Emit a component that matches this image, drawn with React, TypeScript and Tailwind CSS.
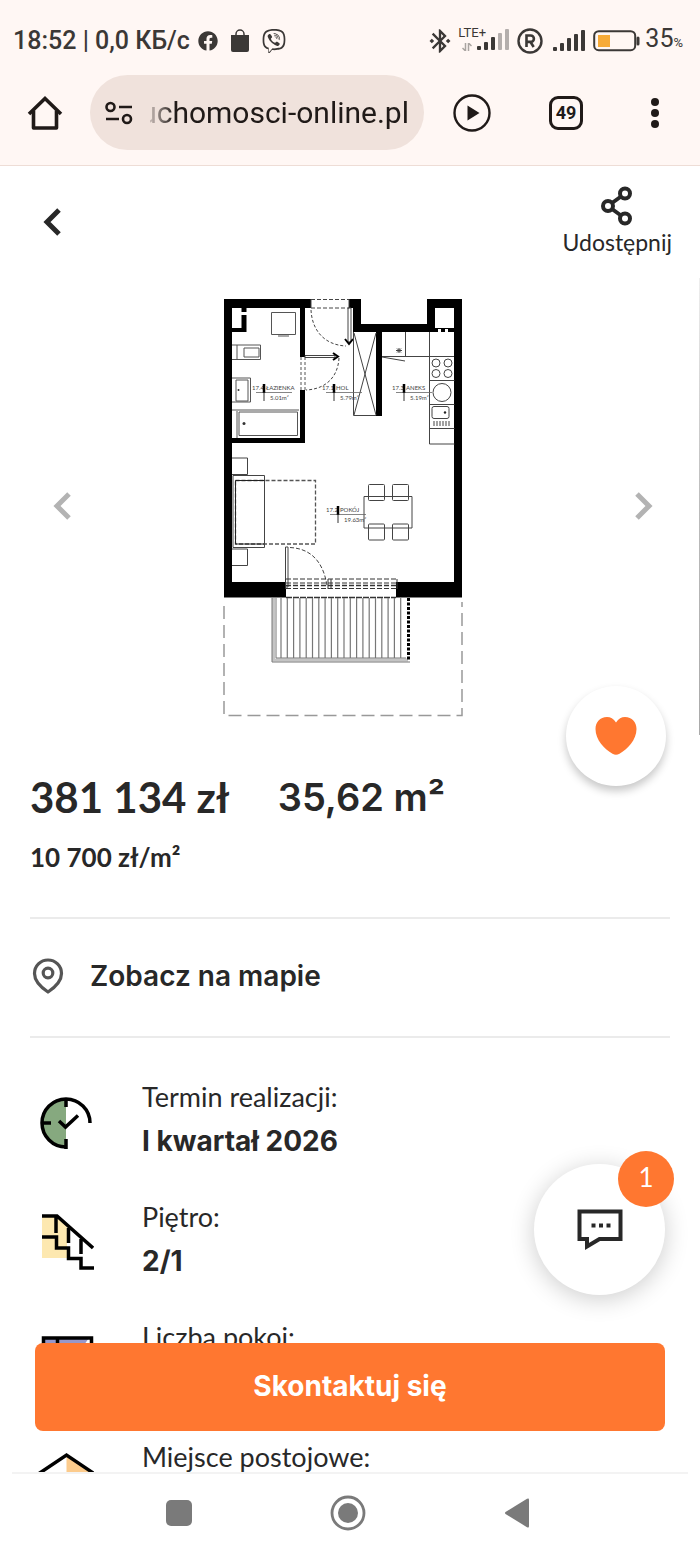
import React from 'react';
import { FaFacebook, FaViber } from 'react-icons/fa';
import { MdBluetoothConnected } from 'react-icons/md';

/* ---------- status bar ---------- */

function SignalIcon({ active = 5, className = '' }: { active?: number; className?: string }) {
  return (
    <svg viewBox="0 0 32 22" className={className} fill="#3b3836">
      {[4, 8, 13, 17, 21].map((h, i) => (
        <rect key={h} x={i * 7} y={21 - h} width="4" height={h} rx="1" opacity={i < active ? 1 : 0.38} />
      ))}
    </svg>
  );
}

function StatusBar() {
  return (
    <div className="flex h-[75px] items-center justify-between pt-[6px] pr-[17px] pl-[13px] text-[#3b3836]">
      <div className="flex items-center">
        <span className="text-[25px] leading-8 font-medium whitespace-pre">18:52 | 0,0 КБ/с</span>
        <FaFacebook className="ml-2 h-5 w-5" />
        <svg viewBox="0 0 20 24" className="ml-3 h-6 w-5">
          <path d="M1 6h18v15a2 2 0 0 1-2 2H3a2 2 0 0 1-2-2z" fill="currentColor" />
          <path d="M6 7V5a4 4 0 0 1 8 0v2" fill="none" stroke="currentColor" strokeWidth="1.5" />
        </svg>
        <FaViber className="ml-3 h-6 w-6" />
      </div>
      <div className="flex items-center">
        <MdBluetoothConnected className="h-7 w-7" />
        <div className="relative ml-1 h-7 w-[51px]">
          <span className="absolute top-0 left-0 text-[13px] leading-3">LTE+</span>
          <svg viewBox="0 0 10 8" className="absolute bottom-1 left-1 h-2 w-[10px]" fill="none" stroke="#a9a4a1" strokeWidth="1.5">
            <path d="M3.5 0v8L.5 5M6.500 8V0l3 3" />
          </svg>
          <SignalIcon active={3} className="absolute right-0 bottom-1 h-[22px] w-8" />
        </div>
        <svg viewBox="0 0 26 26" className="ml-2 h-[26px] w-[26px]" fill="none" stroke="currentColor">
          <circle cx="13" cy="13" r="11.500" strokeWidth="2.400" />
          <path d="M9.500 19V7.500h4.200a3.200 3.200 0 0 1 0 6.400H9.500M13.500 14l3.200 5" strokeWidth="2.600" />
        </svg>
        <SignalIcon className="ml-2.5 h-[22px] w-8" />
        <svg viewBox="0 0 48 22" className="ml-2 h-[22px] w-12">
          <rect x="1.200" y="1.200" width="41" height="19" rx="4.500" fill="none" stroke="currentColor" strokeWidth="2" />
          <rect x="5" y="5" width="12" height="12" fill="#f7ab38" />
          <path d="M45 8v6" stroke="currentColor" strokeWidth="3" strokeLinecap="round" />
        </svg>
        <span className="ml-1 text-[25px] leading-8">
          35<span className="text-[13px]">%</span>
        </span>
      </div>
    </div>
  );
}

/* ---------- browser toolbar ---------- */

function BrowserBar() {
  return (
    <div className="flex items-center pb-[15px] text-[#201a18]">
      <button aria-label="Strona główna" className="flex w-[90px] justify-center">
        <svg viewBox="0 0 36 36" className="h-9 w-9" fill="none" stroke="currentColor" strokeWidth="3.600" strokeLinejoin="round">
          <path d="M2 19 18 3.500 34 19" strokeLinejoin="miter" />
          <path d="M6.500 15.500V33h23V15.500" />
        </svg>
      </button>
      <button className="flex h-[75px] min-w-0 flex-1 items-center rounded-full bg-[#f0e2dc] pr-[15px] pl-[15px]">
        <svg viewBox="0 0 28 24" className="h-6 w-7 shrink-0" fill="none" stroke="currentColor" strokeWidth="2.600">
          <circle cx="5.500" cy="6" r="4" />
          <path d="M14 6h13M1 18h13" />
          <circle cx="22" cy="18" r="4" />
        </svg>
        <span className="ml-[17px] flex min-w-0 flex-1 justify-end overflow-hidden text-[30px] leading-10 whitespace-nowrap [mask-image:linear-gradient(to_right,transparent_-6px,black_24px)]">
          uchomosci-online.pl
        </span>
      </button>
      <div className="flex w-[276px] items-center justify-between pr-[35px] pl-[29px]">
        <button aria-label="Odtwórz">
          <svg viewBox="0 0 38 38" className="h-[38px] w-[38px]">
            <circle cx="19" cy="19" r="17.500" fill="none" stroke="currentColor" strokeWidth="2.400" />
            <path d="M14.500 11.500v15l12-7.500z" fill="currentColor" />
          </svg>
        </button>
        <button className="mr-1 flex h-[34px] w-[34px] items-center justify-center rounded-[9px] border-3 border-current text-lg font-bold">
          49
        </button>
        <button aria-label="Menu">
          <svg viewBox="0 0 20 32" className="h-8 w-5" fill="currentColor">
            <circle cx="10" cy="5" r="4" />
            <circle cx="10" cy="16" r="4" />
            <circle cx="10" cy="27" r="4" />
          </svg>
        </button>
      </div>
    </div>
  );
}

/* ---------- floor plan ---------- */

function RoomLabel({ x, y, no, name, area }: { x: number; y: number; no: string; name: string; area: string }) {
  return (
    <g fill="#444" fontSize="6">
      <text x={x} y={y}>{no}</text>
      <text x={x + 14} y={y}>{name}</text>
      <text x={x + 18} y={y + 10}>{area}</text>
      <path d={`M${x + 4} ${y + 2.5}h36`} stroke="#666" strokeWidth="0.8" />
      <path d={`M${x + 12} ${y - 6}v9`} stroke="#000" strokeWidth="2.500" />
      <path d={`M${x + 12} ${y + 2}v9`} stroke="#333" strokeWidth="1" />
    </g>
  );
}

function FloorPlan() {
  const boards = Array.from({ length: 20 }, (_, i) => 281 + i * 6.3);
  return (
    <svg viewBox="223 298 240 419" className="w-60 max-w-full" role="img" aria-label="Rzut mieszkania">
      {/* walls */}
      <g fill="#000">
        <path d="M224 299h87v9h-79v274h54v15.500h-62z" />
        <path d="M349 299h12v25h66v-25h35v298.500h-66V582h58V332H353V308h-4z" />
        <path d="M300 308h5v49h-5zM300 390h5v53h-73v-5h68z" />
        <path d="M376 332h6v84h-6zM241.500 308h5v24H232v-4h9.500z" />
      </g>
      <g fill="#fff">
        <path d="M435 308h19v20h-19zM241 312h6v3h-6zM438 329h3v3h-3zM445 329h3v3h-3z" />
      </g>

      {/* bathroom */}
      <g fill="none" stroke="#555" strokeWidth="1">
        <path d="M271.500 312.500h24v22h-24zM278 336h11" />
        <path d="M232 345h28.500v14.500H232M237 345v14M244 348h15v9h-15z" />
        <path d="M232 378h18.500v24H232M236 380h12v21h-12zM232 410h67M237 411v27M239 412h58.500v23.500h-58.500z" />
        <path d="M301 357v33M305 357v33" strokeDasharray="3 2" />
      </g>
      <g fill="#333">
        <circle cx="238.500" cy="390" r="1" />
        <circle cx="244" cy="423.500" r="1.500" />
      </g>

      {/* doors */}
      <g fill="none" stroke="#444" strokeWidth="1">
        <path d="M311 299.500h38M311 308h38" strokeDasharray="4 2" />
        <path d="M311 299v9M349 299v9M348 308h3v34h-3zM305 355.500h30v2h-30z" />
        <path d="M311 310c1 20 13 35 35 36M339 358c-1 18-12 31-33 32" strokeDasharray="3 2" />
        <path d="M345 339l4 5 4-5M333 353l5 3.500-5 3.500" stroke="#000" strokeWidth="2" />
        <path d="M285.500 547h2.500v40h-2.500z" />
        <path d="M290 547.500c20 1 33 13 37 38" strokeDasharray="4 2" />
      </g>

      {/* wardrobe and kitchen */}
      <g fill="none" stroke="#444" strokeWidth="1">
        <path d="M353.500 332v83.500H376M354 333l22 82M376 333l-22 82" />
        <path d="M382 356.500h72M405.500 332v24M429.500 332v112h25M382 357l23 4M429.500 380.500h25M429.500 404.500h25M429.500 428.500h25" />
        <circle cx="436" cy="363" r="4" />
        <circle cx="448" cy="363" r="4" />
        <circle cx="436" cy="373.500" r="4" />
        <circle cx="448" cy="373.500" r="4" />
        <circle cx="442" cy="392.500" r="9" />
        <rect x="432" y="406.500" width="17" height="12" rx="2" />
        <path d="M434 421v5M437 421v5M440 421v5M443 421v5M446 421v5M449 421v5" />
        <path d="M396 350.500h6M399 348v5M397 348.500l4 4M401 348.500l-4 4" />
      </g>
      <circle cx="445" cy="412.500" r="1.200" fill="#222" />

      {/* living room */}
      <g fill="none" stroke="#444" strokeWidth="1">
        <path d="M232 458h15.500v16.500H232M232 549h15.500v16.500H232M233 475.500h31.500v72H233z" />
        <path d="M235.500 480.500h80v63.500h-80z" stroke="#555" strokeWidth="1.300" strokeDasharray="4 2" />
        <path d="M235.500 480.500h29M235.500 480.500v63.500h29" stroke="#222" />
        <path d="M364 496.500h48v31.500h-48z" />
        <rect x="368.500" y="484.500" width="16" height="16" rx="1" />
        <rect x="392.500" y="484.500" width="16" height="16" rx="1" />
        <rect x="368.500" y="524" width="16" height="16" rx="1" />
        <rect x="392.500" y="524" width="16" height="16" rx="1" />
      </g>

      {/* window */}
      <g fill="none" stroke="#333" strokeWidth="1">
        <path d="M286 579h110M286 583h110M286 588.500h110" strokeDasharray="5 2" />
        <path d="M286 585.500h110" strokeDasharray="5 2" strokeWidth="1.500" />
        <path d="M328 579v10M331 579v10M397 579v10M285.500 579v10" />
        <path d="M286 597.500h110" strokeDasharray="6 1" strokeWidth="1.500" />
      </g>

      {/* balcony */}
      <g fill="none" stroke="#777" strokeWidth="1">
        {boards.map((x) => (
          <path key={x} d={`M${x} 598v60`} stroke="#777" strokeWidth="1.200" />
        ))}
        <path d="M273.500 598v62H408" stroke="#c4c4c4" strokeWidth="3" />
        <path d="M272 598v64h138M276 598v60h130" />
        <path d="M408.500 598v63" stroke="#000" strokeWidth="3" strokeDasharray="3 1.500" />
      </g>
      <path d="M224 606v109.500h238V602" fill="none" stroke="#999" strokeWidth="1.500" strokeDasharray="13 6" />

      <RoomLabel x={252} y={390} no="17.4" name="ŁAZIENKA" area="5.01m²" />
      <RoomLabel x={322} y={390} no="17.1" name="HOL" area="5.79m²" />
      <RoomLabel x={392} y={390} no="17.3" name="ANEKS" area="5.19m²" />
      <RoomLabel x={326} y={512} no="17.2" name="POKÓJ" area="19.63m²" />
    </svg>
  );
}

/* ---------- listing details ---------- */

function ClockIcon() {
  return (
    <svg viewBox="0 0 56 64" className="h-16 w-14" fill="none" stroke="#000" strokeWidth="3.500">
      <path d="M28 11a25 25 0 0 0 0 50z" fill="#86a97f" stroke="none" />
      <path d="M52 36A24 24 0 1 0 28 60" />
      <path d="M28 11v9M3 36h10M28 52v10M21 34l6.500 6L40 28.500" />
    </svg>
  );
}

function StairsIcon() {
  return (
    <svg viewBox="0 0 56 64" className="h-16 w-14" fill="none" stroke="#000" strokeWidth="3.500">
      <path d="M4 9h15l10 8v34H4z" fill="#fde8b0" stroke="none" />
      <path d="M4 9h15l36 32M18 10v16M30.500 21v15M43 32v15" />
      <path d="M4 30h14.500v11h12v10.500H43V61h13" />
    </svg>
  );
}

function RoomsIcon() {
  return (
    <svg viewBox="0 0 56 64" className="h-16 w-14" fill="none" stroke="#000" strokeWidth="3.500">
      <path d="M5 11h46L30 40v18H5z" fill="#9797c9" stroke="none" />
      <path d="M5.500 11h48v48h-48zM19.500 11v20h-14" />
    </svg>
  );
}

function ParkingIcon() {
  return (
    <svg viewBox="0 0 56 64" className="h-16 w-14" fill="none" stroke="#000" strokeWidth="3.500">
      <path d="M28.500 9 54 26v34H28.500z" fill="#fccb8c" stroke="none" />
      <path d="M1 26.500 28.500 8 56 26.500M6 25v34h45V25" />
    </svg>
  );
}

const details = [
  { label: 'Termin realizacji:', value: 'I kwartał 2026', Icon: ClockIcon },
  { label: 'Piętro:', value: '2/1', Icon: StairsIcon },
  { label: 'Liczba pokoi:', value: '1', Icon: RoomsIcon },
  { label: 'Miejsce postojowe:', value: 'tak', Icon: ParkingIcon },
];

function Chevron({ className = '' }: { className?: string }) {
  return (
    <svg viewBox="0 0 24 32" className={`h-8 w-6 ${className}`} fill="none" stroke="currentColor" strokeWidth="5">
      <path d="M19 4 7 16l12 12" />
    </svg>
  );
}

function ListingHeader() {
  return (
    <div className="flex h-28 items-center justify-between pr-7 pl-10">
      <button aria-label="Wstecz">
        <Chevron />
      </button>
      <button className="flex flex-col items-center text-[23px] leading-8">
        <svg viewBox="0 0 32 40" className="h-10 w-8" fill="none" stroke="currentColor" strokeWidth="4">
          <circle cx="24" cy="7.500" r="5" />
          <circle cx="7" cy="20" r="5" />
          <circle cx="24" cy="32.500" r="5" />
          <path d="m11 17 9-6.500M11 23l9 6.500" />
        </svg>
        Udostępnij
      </button>
    </div>
  );
}

function Gallery() {
  return (
    <div className="relative flex items-center pt-5 pr-11 pb-[18px] pl-[50px]">
      <button aria-label="Poprzednie" className="pb-1 text-[#b3b3b3]">
        <Chevron />
      </button>
      <div className="flex min-w-0 flex-1 justify-center pr-5">
        <FloorPlan />
      </div>
      <button aria-label="Następne" className="pb-1 text-[#b3b3b3]">
        <Chevron className="rotate-180" />
      </button>
      {/* edge of the next photo */}
      <div className="absolute inset-y-0 right-0 w-px bg-gradient-to-b from-[#eee] via-[#bbb] to-[#aaa]" />
      <button
        aria-label="Dodaj do ulubionych"
        className="absolute right-[34px] -bottom-[51px] flex h-[100px] w-[100px] items-center justify-center rounded-full bg-white shadow-[0_5px_8px_rgba(0,0,0,0.22)]"
      >
        <svg viewBox="0 0 42 38" className="h-[38px] w-[42px]" fill="#ff7730">
          <path d="M21 5.500C18.500 1.500 15.500 0 12 0 5 0 .5 5 .5 12c0 11 9 20 17 24.800q3.500 2 7 0C32.500 32 41.500 23 41.500 12 41.500 5 37 0 30 0c-3.500 0-6.500 1.500-9 5.500z" />
        </svg>
      </button>
    </div>
  );
}

function FloatingActions() {
  return (
    <div className="pointer-events-none absolute inset-x-0 bottom-0 flex flex-col items-end gap-12 px-[35px] pb-[41px]">
      <button
        aria-label="Czat"
        className="pointer-events-auto relative flex h-[131px] w-[131px] items-center justify-center rounded-full bg-white shadow-[0_4px_24px_rgba(0,0,0,0.2)]"
      >
        <svg viewBox="0 0 46 42" className="h-[42px] w-[46px]" fill="none" stroke="#282828" strokeWidth="4">
          <path d="M2.500 2.500h41v27.500H22.500L10 37.500V30H2.500z" />
          <path d="M14.500 16.500h4M22 16.500h4M29.500 16.500h4" />
        </svg>
        <span className="absolute -top-[13px] -right-[9px] flex h-14 w-14 items-center justify-center rounded-full bg-[#ff7730] pb-1 text-[26px] leading-8 text-white">
          1
        </span>
      </button>
      <button className="pointer-events-auto h-[88px] w-full rounded-lg bg-[#ff7730] pb-0.5 font-[Inter,sans-serif] text-[28px] font-bold text-white">
        Skontaktuj się
      </button>
    </div>
  );
}

function SystemNav() {
  return (
    <nav className="px-3">
      <div className="flex h-[84px] items-center justify-between border-t-2 border-[#f3f3f3] pr-[158px] pb-1 pl-[154px] text-[#7a7a7a]">
        <button aria-label="Ostatnie" className="h-[26px] w-[26px] rounded-[5px] bg-current" />
        <button aria-label="Ekran główny">
          <svg viewBox="0 0 36 36" className="h-9 w-9">
            <circle cx="18" cy="18" r="16" fill="none" stroke="currentColor" strokeWidth="2.800" />
            <circle cx="18" cy="18" r="10" fill="currentColor" />
          </svg>
        </button>
        <button aria-label="Cofnij">
          <svg viewBox="0 0 26 30" className="h-[30px] w-[26px]" fill="currentColor">
            <path d="M23 .8q2-1.200 2 1v26.400q0 2.200-2 1L1.500 16q-1-1 0-2z" />
          </svg>
        </button>
      </div>
    </nav>
  );
}

export default function App() {
  return (
    <div className="flex h-screen flex-col bg-white font-[Lato,sans-serif] text-[#282828]">
      <header className="border-b border-[#eeddd6] bg-[#fff7f4] font-[Roboto,sans-serif]">
        <StatusBar />
        <BrowserBar />
      </header>

      <div className="relative min-h-0 flex-1">
        <main className="h-full overflow-y-auto [scrollbar-width:none]">
          <ListingHeader />
          <Gallery />

          <div className="px-[30px]">
            <section className="border-b-2 border-[#ebebeb] pt-[38px] pb-11 font-bold">
              <div className="flex items-center gap-12">
                <h1 className="text-[42px] leading-[48px]">381 134 zł</h1>
                <p className="font-[Inter,sans-serif] text-[38px] leading-[48px] font-semibold">35,62 m²</p>
              </div>
              <p className="mt-5 text-[26px] leading-8">10 700 zł/m²</p>
            </section>

            <a
              href="#mapa"
              className="flex h-[119px] items-center gap-6 border-b-2 border-[#ebebeb] pb-1 font-[Inter,sans-serif] text-[28px] font-semibold"
            >
              <svg viewBox="0 0 36 36" className="h-9 w-9" fill="none" stroke="#555" strokeWidth="3.200">
                <path d="M18 34C9 28 4.500 22.500 4.500 15.500a13.500 13.500 0 0 1 27 0C31.500 22.500 27 28 18 34z" strokeLinejoin="round" />
                <circle cx="18" cy="15" r="4.800" />
              </svg>
              Zobacz na mapie
            </a>

            <dl className="flex flex-col gap-9 pt-[39px] pb-36 pl-2">
              {details.map(({ label, value, Icon }) => (
                <div key={label} className="flex items-center gap-12">
                  <Icon />
                  <div className="leading-10">
                    <dt className="text-[27px]">{label}</dt>
                    <dd className="pt-1 font-[Inter,sans-serif] text-[28px] font-bold">{value}</dd>
                  </div>
                </div>
              ))}
            </dl>
          </div>
        </main>
        <FloatingActions />
      </div>

      <SystemNav />
    </div>
  );
}
